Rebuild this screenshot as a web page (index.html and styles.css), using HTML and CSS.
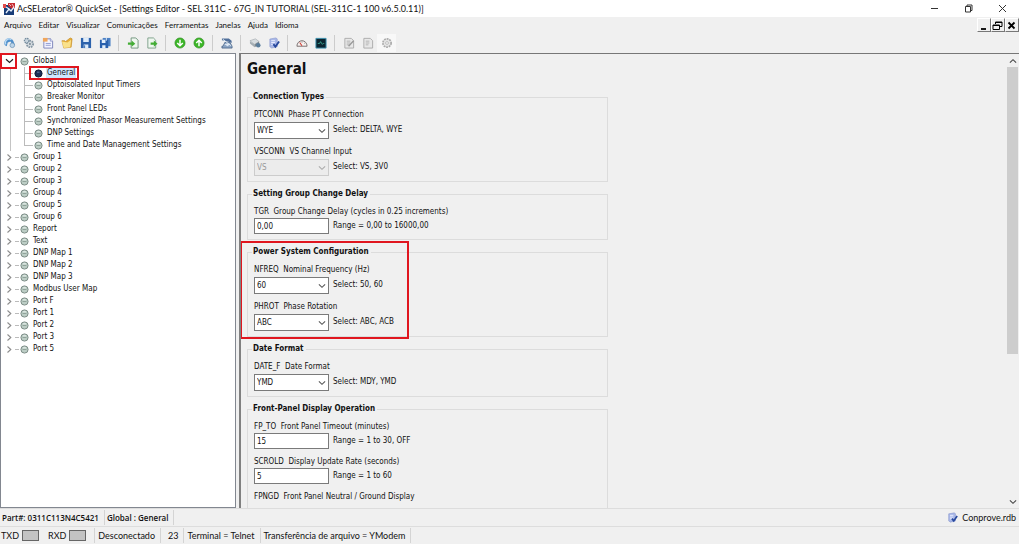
FILE: index.html
```html
<!DOCTYPE html>
<html lang="pt-BR">
<head>
<meta charset="utf-8">
<title>AcSELerator QuickSet</title>
<link rel="stylesheet" href="styles.css">
</head>
<body>
<svg class="defs" aria-hidden="true">
  <symbol id="dot" viewBox="0 0 9 9"><circle cx="4.5" cy="4.5" r="3.6" fill="#bccdc5" stroke="#7d8d87"/><path d="M2.500 4.500h4" stroke="#90a39a"/><path d="M3 2.800h3" stroke="#e6eeea"/></symbol>
  <symbol id="dot-on" viewBox="0 0 9 9"><circle cx="4.5" cy="4.5" r="3.6" fill="#1d2f57" stroke="#101a38"/><path d="M3 3.2h2.5" stroke="#5d739d"/></symbol>
  <symbol id="right" viewBox="0 0 7 9"><path d="M1.5 1.5 4.8 4.5 1.5 7.5" fill="none" stroke="#8c8c8c" stroke-width="1.1"/></symbol>
  <symbol id="down" viewBox="0 0 9 6"><path d="M1 1.2 4.5 4.5 8 1.2" fill="none" stroke="currentColor" stroke-width="1.2"/></symbol>
  <symbol id="db" viewBox="0 0 13 13"><path d="M2 2.2 8.5 1 10 2v8.5L4 12 2 10.500z" fill="#a9b8e8" stroke="#8391ca" stroke-width=".6"/><path d="M3.500 4h4M3.500 6h4M3.500 8h3" stroke="#eef1ff"/><path d="M5.800 7.800 8 10.500 12 4.800" fill="none" stroke="#27489d" stroke-width="2"/></symbol>
  <symbol id="page" viewBox="0 0 13 13"><path d="M2 1.500h7l2.500 2.500v8H2z" fill="#e8e8e8" stroke="#aaa"/><path d="M4 4.500h4M4 6.500h4M4 8.500h3" stroke="#b0b0b0"/></symbol>
</svg>
<div class="window">
  <header class="titlebar">
    <svg class="logo" viewBox="0 0 12 12"><path d="M1 2h10v10H1z" fill="#193d78"/><path d="M5 0h7v5L9 6 5 3z" fill="#c72d32"/><path d="M0 1h3v4H0z" fill="#e24b4a"/><path d="M3 10 6 6l2 2 3-4M3 4l3 2" stroke="#e6effb" stroke-width="1.300" fill="none"/><path d="M6 1l2 2M9 1l2 3" stroke="#fff" stroke-width=".7"/></svg>
    <h1 class="title">AcSELerator® QuickSet - [Settings Editor - SEL 311C - 67G_IN TUTORIAL (SEL-311C-1 100 v6.5.0.11)]</h1>
    <div class="window-controls">
      <button aria-label="Minimizar"><svg viewBox="0 0 9 9"><path d="M1 4.500h7" /></svg></button>
      <button aria-label="Restaurar"><svg viewBox="0 0 9 9"><path d="M1.500 2.500h5v5.500h-5zM3 2.500v-1.500h5v5.500H6.500"/></svg></button>
      <button aria-label="Fechar"><svg viewBox="0 0 9 9"><path d="M1 1l7 7M8 1 1 8"/></svg></button>
    </div>
  </header>
  <nav class="menubar">
    <button>Arquivo</button><button>Editar</button><button>Visualizar</button><button>Comunicações</button><button>Ferramentas</button><button>Janelas</button><button>Ajuda</button><button>Idioma</button>
    <div class="mdi-controls">
      <button aria-label="Minimizar janela"><svg viewBox="0 0 11 11"><path d="M3 9h5" stroke-width="1.800"/></svg></button>
      <button aria-label="Restaurar janela"><svg viewBox="0 0 11 11"><path d="M3.500 4V2h6.500v4.500H8M3.500 2.500H10M1 5h6.500v4.500H1zM1 5.500h6.500"/></svg></button>
      <button aria-label="Fechar janela"><svg viewBox="0 0 11 11"><path d="M2.500 2.500l6 6M8.500 2.500l-6 6" stroke-width="1.800"/></svg></button>
    </div>
  </nav>
  <div class="toolbar">
    <button aria-label="Conectar"><svg viewBox="0 0 13 13"><path d="M1 9a5 5 0 0 1 9-5l2 5-3-1-2-3-3 1-1 4z" fill="#4f8fcb"/><path d="M2 8a4 4 0 0 1 6-5" stroke="#b9d9f3" stroke-width="1.500" fill="none"/><circle cx="9" cy="9" r="2.500" fill="#bcd4e8" stroke="#6b94b8" stroke-width=".8"/></svg></button>
    <button aria-label="Configurar"><svg viewBox="0 0 13 13"><circle cx="7.500" cy="7.500" r="3.500" fill="#d4dbe0" stroke="#8797a4" stroke-width="2" stroke-dasharray="1.700 .9"/><circle cx="4" cy="4" r="2.500" fill="#c7d3dc" stroke="#71899c" stroke-width="1.300" stroke-dasharray="1.500 .7"/><circle cx="7.500" cy="7.500" r="1" fill="#6b7a86"/></svg></button>
    <button aria-label="Novo"><svg viewBox="0 0 13 13"><path d="M2 2h7l2.500 2.500V12H2z" fill="#f3f4ff" stroke="#7a82b8"/><path d="M4 7h5.500M4 9h5.500" stroke="#8d99cf"/><path d="M1 1h5v4H1z" fill="#f0a65b"/><path d="M9 1.500v3h2.500" fill="#dfe3ff" stroke="#7a82b8" stroke-width=".7"/></svg></button>
    <button aria-label="Abrir"><svg viewBox="0 0 13 13"><path d="M1 4h3l1 1 5-4 2 1-1 9-8 1z" fill="#e8ae38" stroke="#c28b24" stroke-width=".7"/><path d="M1 5l6 1 4-3-1 8-7 1z" fill="#fae18a"/></svg></button>
    <button aria-label="Salvar"><svg viewBox="0 0 13 13"><path d="M1 1h11v11H1z" fill="#2c62ac"/><path d="M3.500 1h6v4.500h-6zM4 8h5v4H4z" fill="#dcebfa"/><path d="M5 9v3" stroke="#2c62ac"/></svg></button>
    <button aria-label="Salvar como"><svg viewBox="0 0 13 13"><path d="M4 1h8.500v9H4z" fill="#4c81c5"/><path d="M1 3h9v9H1z" fill="#2860ad"/><path d="M3 3h4v3.500H3zM3.500 9h3.500v3H3.500z" fill="#e2effc"/><path d="M8 1v3" stroke="#d9e8f8"/></svg></button>
    <span class="sep"></span>
    <button aria-label="Importar"><svg viewBox="0 0 13 13"><path d="M4.500 1h5L12 3.500V12H4.500z" fill="#eef7ef" stroke="#6e927b"/><path d="M1 6h4V3.800L9 7.300 5 10.500V8.300H1z" fill="#43ad35"/></svg></button>
    <button aria-label="Exportar"><svg viewBox="0 0 13 13"><path d="M2 1h6l2.500 2.500V12H2z" fill="#eef7ef" stroke="#7b9e88"/><path d="M5 6h3.500V3.800l4 3.500-4 3.200V8.300H5z" fill="#43ad35"/></svg></button>
    <span class="sep"></span>
    <button aria-label="Ler"><svg viewBox="0 0 13 13"><circle cx="6.500" cy="6.500" r="5.500" fill="#3cb728" stroke="#2b8a1e" stroke-width=".7"/><path d="M6.500 3v6M3.500 6.500l3 3 3-3" fill="none" stroke="#fff" stroke-width="1.600"/></svg></button>
    <button aria-label="Enviar"><svg viewBox="0 0 13 13"><circle cx="6.500" cy="6.500" r="5.500" fill="#3cb728" stroke="#2b8a1e" stroke-width=".7"/><path d="M6.500 10V4M3.500 6.500l3-3 3 3" fill="none" stroke="#fff" stroke-width="1.600"/></svg></button>
    <span class="sep"></span>
    <button aria-label="Terminal de comunicação"><svg viewBox="0 0 13 13"><path d="M1 1.500h7.500l3 2.500v2.500L8 5 1 3.500z" fill="#51709b"/><path d="M2 10 4.500 5.500h5l2.500 4.500v2H1v-2z" fill="#8ca5c4" stroke="#3d5a80" stroke-width=".8"/><path d="M2 2.500l9 7M4 8h5" stroke="#e9f1f9"/><circle cx="7" cy="8.500" r="1.500" fill="#dfe8f2"/></svg></button>
    <span class="sep"></span>
    <button aria-label="Dispositivo"><svg viewBox="0 0 13 13"><path d="M1 4l6-2 4 3-5 3z" fill="#d8dde0" stroke="#9aa3a8" stroke-width=".6"/><path d="M1 4.500 6 8v3L1 7z" fill="#a4adb3"/><path d="M6 8l5-3v3l-5 3z" fill="#7c868c"/><circle cx="10" cy="9" r="2.500" fill="#5a7d9b"/></svg></button>
    <button aria-label="Banco de dados"><svg><use href="#db"/></svg></button>
    <span class="sep"></span>
    <button aria-label="Medição"><svg viewBox="0 0 13 13"><path d="M1 10a5.500 6 0 0 1 11 0z" fill="#f7f1ef" stroke="#746a6a"/><path d="M6.500 9.500 4 6" stroke="#ce3c32" stroke-width="1.200"/><path d="M6.500 5v1M9.500 6.500l-.7.7" stroke="#777"/></svg></button>
    <button aria-label="Terminal"><svg viewBox="0 0 13 13"><path d="M1 1.500h11v10.500H1z" fill="#0c2530" stroke="#3d95b3"/><path d="M3 7h2l1-2 2 3 1-1h1" fill="none" stroke="#38a38f"/></svg></button>
    <span class="sep"></span>
    <button aria-label="Editar página" disabled><svg viewBox="0 0 13 13"><use href="#page"/><path d="M6 10l5.500-6" stroke="#999" stroke-width="1.500"/></svg></button>
    <button aria-label="Página" disabled><svg><use href="#page"/></svg></button>
    <button class="light" aria-label="Opções" disabled><svg viewBox="0 0 13 13"><circle cx="6.500" cy="6.500" r="4.500" fill="#e4e4e4" stroke="#aaa" stroke-width="1.800" stroke-dasharray="2 .9"/><circle cx="6.500" cy="6.500" r="1.500" fill="#fff" stroke="#aaa" stroke-width=".8"/></svg></button>
  </div>
  <main class="workspace">
    <aside class="tree">
      <ul>
        <li class="open">
          <div class="row"><button class="toggle" aria-label="Recolher Global"><svg class="down"><use href="#down"/></svg><span class="mark mark-toggle"></span></button><svg class="dot"><use href="#dot"/></svg><button>Global</button></div>
          <ul class="children">
            <li class="row selected"><svg class="dot"><use href="#dot-on"/></svg><button>General</button><span class="mark mark-item"></span></li>
            <li class="row"><svg class="dot"><use href="#dot"/></svg><button>Optoisolated Input Timers</button></li>
            <li class="row"><svg class="dot"><use href="#dot"/></svg><button>Breaker Monitor</button></li>
            <li class="row"><svg class="dot"><use href="#dot"/></svg><button>Front Panel LEDs</button></li>
            <li class="row"><svg class="dot"><use href="#dot"/></svg><button>Synchronized Phasor Measurement Settings</button></li>
            <li class="row"><svg class="dot"><use href="#dot"/></svg><button>DNP Settings</button></li>
            <li class="row"><svg class="dot"><use href="#dot"/></svg><button>Time and Date Management Settings</button></li>
          </ul>
        </li>
        <li class="row closed"><button class="toggle" aria-label="Expandir"><svg class="right"><use href="#right"/></svg></button><svg class="dot"><use href="#dot"/></svg><button>Group 1</button></li>
        <li class="row closed"><button class="toggle" aria-label="Expandir"><svg class="right"><use href="#right"/></svg></button><svg class="dot"><use href="#dot"/></svg><button>Group 2</button></li>
        <li class="row closed"><button class="toggle" aria-label="Expandir"><svg class="right"><use href="#right"/></svg></button><svg class="dot"><use href="#dot"/></svg><button>Group 3</button></li>
        <li class="row closed"><button class="toggle" aria-label="Expandir"><svg class="right"><use href="#right"/></svg></button><svg class="dot"><use href="#dot"/></svg><button>Group 4</button></li>
        <li class="row closed"><button class="toggle" aria-label="Expandir"><svg class="right"><use href="#right"/></svg></button><svg class="dot"><use href="#dot"/></svg><button>Group 5</button></li>
        <li class="row closed"><button class="toggle" aria-label="Expandir"><svg class="right"><use href="#right"/></svg></button><svg class="dot"><use href="#dot"/></svg><button>Group 6</button></li>
        <li class="row closed"><button class="toggle" aria-label="Expandir"><svg class="right"><use href="#right"/></svg></button><svg class="dot"><use href="#dot"/></svg><button>Report</button></li>
        <li class="row closed"><button class="toggle" aria-label="Expandir"><svg class="right"><use href="#right"/></svg></button><svg class="dot"><use href="#dot"/></svg><button>Text</button></li>
        <li class="row closed"><button class="toggle" aria-label="Expandir"><svg class="right"><use href="#right"/></svg></button><svg class="dot"><use href="#dot"/></svg><button>DNP Map 1</button></li>
        <li class="row closed"><button class="toggle" aria-label="Expandir"><svg class="right"><use href="#right"/></svg></button><svg class="dot"><use href="#dot"/></svg><button>DNP Map 2</button></li>
        <li class="row closed"><button class="toggle" aria-label="Expandir"><svg class="right"><use href="#right"/></svg></button><svg class="dot"><use href="#dot"/></svg><button>DNP Map 3</button></li>
        <li class="row closed"><button class="toggle" aria-label="Expandir"><svg class="right"><use href="#right"/></svg></button><svg class="dot"><use href="#dot"/></svg><button>Modbus User Map</button></li>
        <li class="row closed"><button class="toggle" aria-label="Expandir"><svg class="right"><use href="#right"/></svg></button><svg class="dot"><use href="#dot"/></svg><button>Port F</button></li>
        <li class="row closed"><button class="toggle" aria-label="Expandir"><svg class="right"><use href="#right"/></svg></button><svg class="dot"><use href="#dot"/></svg><button>Port 1</button></li>
        <li class="row closed"><button class="toggle" aria-label="Expandir"><svg class="right"><use href="#right"/></svg></button><svg class="dot"><use href="#dot"/></svg><button>Port 2</button></li>
        <li class="row closed"><button class="toggle" aria-label="Expandir"><svg class="right"><use href="#right"/></svg></button><svg class="dot"><use href="#dot"/></svg><button>Port 3</button></li>
        <li class="row closed"><button class="toggle" aria-label="Expandir"><svg class="right"><use href="#right"/></svg></button><svg class="dot"><use href="#dot"/></svg><button>Port 5</button></li>
      </ul>
    </aside>
    <section class="editor">
      <div class="form">
        <h2>General</h2>
        <fieldset><legend>Connection Types</legend>
          <div class="field"><label for="ptconn">PTCONN&nbsp; Phase PT Connection</label><div class="line"><span class="combo"><select id="ptconn"><option>WYE</option><option>DELTA</option></select><svg><use href="#down"/></svg></span><span>Select: DELTA, WYE</span></div></div>
          <div class="field"><label for="vsconn">VSCONN&nbsp; VS Channel Input</label><div class="line"><span class="combo"><select id="vsconn" disabled><option>VS</option><option>3V0</option></select><svg><use href="#down"/></svg></span><span>Select: VS, 3V0</span></div></div>
        </fieldset>
        <fieldset><legend>Setting Group Change Delay</legend>
          <div class="field"><label for="tgr">TGR&nbsp; Group Change Delay (cycles in 0.25 increments)</label><div class="line"><input id="tgr" value="0,00"><span>Range = 0,00 to 16000,00</span></div></div>
        </fieldset>
        <div class="marked">
        <fieldset><legend>Power System Configuration</legend>
          <div class="field"><label for="nfreq">NFREQ&nbsp; Nominal Frequency (Hz)</label><div class="line"><span class="combo"><select id="nfreq"><option>60</option><option>50</option></select><svg><use href="#down"/></svg></span><span>Select: 50, 60</span></div></div>
          <div class="field"><label for="phrot">PHROT&nbsp; Phase Rotation</label><div class="line"><span class="combo"><select id="phrot"><option>ABC</option><option>ACB</option></select><svg><use href="#down"/></svg></span><span>Select: ABC, ACB</span></div></div>
        </fieldset>
        <span class="mark mark-group"></span>
        </div>
        <fieldset><legend>Date Format</legend>
          <div class="field"><label for="datef">DATE_F&nbsp; Date Format</label><div class="line"><span class="combo"><select id="datef"><option>YMD</option><option>MDY</option></select><svg><use href="#down"/></svg></span><span>Select: MDY, YMD</span></div></div>
        </fieldset>
        <fieldset><legend>Front-Panel Display Operation</legend>
          <div class="field"><label for="fpto">FP_TO&nbsp; Front Panel Timeout (minutes)</label><div class="line"><input id="fpto" value="15"><span>Range = 1 to 30, OFF</span></div></div>
          <div class="field"><label for="scrold">SCROLD&nbsp; Display Update Rate (seconds)</label><div class="line"><input id="scrold" value="5"><span>Range = 1 to 60</span></div></div>
          <div class="field"><span>FPNGD&nbsp; Front Panel Neutral / Ground Display</span></div>
        </fieldset>
      </div>
      <div class="scrollbar">
        <button aria-label="Rolar para cima"><svg class="up"><use href="#down"/></svg></button>
        <div class="track"><div class="thumb"></div></div>
        <button aria-label="Rolar para baixo"><svg><use href="#down"/></svg></button>
      </div>
    </section>
  </main>
  <footer>
    <div class="status strong"><span class="cell">Part#: 0311C113N4C5421</span><span class="cell">Global : General</span><span class="file"><svg><use href="#db"/></svg>Conprove.rdb</span></div>
    <div class="status"><span class="cell lamps"><span>TXD</span><i class="lamp"></i><span class="rxd">RXD</span><i class="lamp"></i></span><span class="cell">Desconectado</span><span class="cell port">23</span><span class="cell">Terminal = Telnet</span><span class="cell">Transferência de arquivo = YModem</span></div>
  </footer>
</div>
</body>
</html>
```
FILE: styles.css
```css
* { box-sizing: border-box; }
body {
  margin: 0;
  background: #fff;
  color: #111;
  font: 8px/12px "DejaVu Sans Condensed", "DejaVu Sans", sans-serif;
}
button { padding: 0; border: 0; background: none; color: inherit; font: inherit; }
ul { margin: 0; padding: 0; list-style: none; }
svg { display: block; flex: none; }
.defs { position: absolute; width: 0; height: 0; }
.window { display: flex; flex-direction: column; height: 100vh; padding-right: 5px; white-space: nowrap; }

.titlebar { display: flex; align-items: center; height: 17px; padding-left: 3px; }
.logo { width: 12px; height: 12px; }
.title { flex: 1; margin: 0 0 0 2px; font: 9px/16px Lato, sans-serif; }
.window-controls { display: flex; }
.window-controls button { display: grid; place-items: center; width: 34px; height: 16px; }
.window-controls svg { width: 9px; height: 9px; fill: none; stroke: #333; }

.menubar { display: flex; align-items: center; gap: 7px; height: 16px; padding-left: 4px; background: #f0f0f0; font: 8px/12px Lato, sans-serif; }
.mdi-controls { display: flex; margin-left: auto; }
.mdi-controls button { width: 14px; height: 14px; border: 1px solid; border-color: #fff #777 #777 #fff; }
.mdi-controls svg { width: 11px; height: 11px; fill: none; stroke: #000; }

.toolbar { display: flex; align-items: center; height: 20px; background: #f0f0f0; }
.toolbar button { display: grid; place-items: center; width: 19px; height: 18px; }
.toolbar svg { width: 12px; height: 12px; }
.toolbar .light { background: #f8f8f8; }
.sep { width: 9px; height: 16px; background: linear-gradient(#ccc, #ccc) center / 1px 100% no-repeat; }

.workspace { display: flex; flex: 1; min-height: 0; gap: 3px; background: #f0f0f0; }
.tree { flex: 0 0 236px; min-width: 0; padding-top: 1px; background: #fff; border: 1px solid #828790; }
.row { display: flex; align-items: center; position: relative; height: 12px; padding-left: 4px; }
.toggle { display: grid; place-items: center; position: relative; width: 9px; height: 12px; margin-right: 6px; color: #222; }
.dot { width: 9px; height: 9px; margin-right: 3px; }
.row button:last-of-type { padding: 0 1px; }
.right { width: 7px; height: 9px; }
.down { width: 9px; height: 6px; }
.closed::before { content: ""; position: absolute; left: 14px; width: 4px; border-top: 1px solid #bbb; }
.children { margin-left: 9px; border-left: 1px solid #c4c4c4; }
.children .row { padding-left: 23px; }
.children .row::before { content: ""; position: absolute; left: 13px; width: 9px; border-top: 1px solid #bbb; }
.children .row::after { content: ""; position: absolute; left: 13px; top: 0; height: 12px; border-left: 1px solid #bbb; }
.children .row:last-child::after { height: 6px; }
.selected button { background: #cde8ff; }
.mark { position: absolute; border: 2px solid #e0161f; pointer-events: none; }
.mark-toggle { left: -5px; top: -2px; width: 17px; height: 16px; }
.mark-item { left: 18px; top: -1px; width: 50px; height: 14px; }

.editor { display: flex; flex: 1; min-width: 0; background: #f0f0f0; border-top: 1px solid #777; border-left: 2px solid #808080; }
.form { flex: 1; min-width: 0; padding: 6px 6px 0; overflow: hidden; }
h2 { margin: 0 0 12px; font: bold 15px/19px "DejaVu Sans Condensed", "DejaVu Sans", sans-serif; }
fieldset { display: flex; flex-direction: column; gap: 7px; max-width: 361px; margin: 0 0 6px; padding: 6px 6px 5px; border: 1px solid #dcdcdc; }
legend { margin-left: -2px; padding: 0 2px 0 1px; font-weight: bold; }
.marked { position: relative; }
.mark-group { left: -7px; top: -5px; width: 169px; height: 98px; }
.field { display: flex; flex-direction: column; }
.line { display: flex; align-items: center; gap: 4px; }
.line input, .combo { width: 75px; height: 16px; }
.line input, .combo select { padding: 0 2px; border: 1px solid #7a7a7a; border-radius: 0; background: #fff; color: #111; font: inherit; }
.combo { display: grid; align-items: center; height: 18px; padding-top: 1px; }
.combo select { grid-area: 1 / 1; width: 75px; height: 17px; appearance: none; }
.combo svg { grid-area: 1 / 1; justify-self: end; z-index: 1; width: 8px; height: 6px; margin-right: 3px; color: #555; pointer-events: none; }
.combo select:disabled { border-color: #ccc; background: #ececec; color: #999; opacity: 1; }
.combo select:disabled + svg { color: #aaa; }

.scrollbar { display: flex; flex-direction: column; width: 13px; }
.scrollbar button { display: grid; place-items: center; height: 13px; }
.scrollbar svg { width: 8px; height: 6px; color: #444; }
.scrollbar .up { transform: rotate(180deg); }
.track { flex: 1; }
.thumb { width: 11px; height: 67%; margin: 0 auto; background: #cdcdcd; }

footer { background: #f0f0f0; font: 9px/15px Lato, sans-serif; }
.status { display: flex; height: 18px; padding: 1px 0; border-top: 1px solid #ddd; }
.cell { display: flex; align-items: center; padding: 0 5px 0 3px; border-right: 1px solid #d4d4d4; }
.strong .cell { padding-left: 2px; font-family: "Open Sans", sans-serif; font-size: 8px; font-weight: 600; }
.file { display: flex; align-items: center; gap: 4px; margin-left: auto; padding-right: 3px; }
.file svg { width: 11px; height: 11px; }
.lamps { gap: 3px; padding-right: 8px; padding-left: 1px; }
.rxd { margin-left: 6px; }
.lamp { width: 17px; height: 11px; background: #c3c3c3; border: 1px solid #666; }
.port { padding-left: 7px; }
```
